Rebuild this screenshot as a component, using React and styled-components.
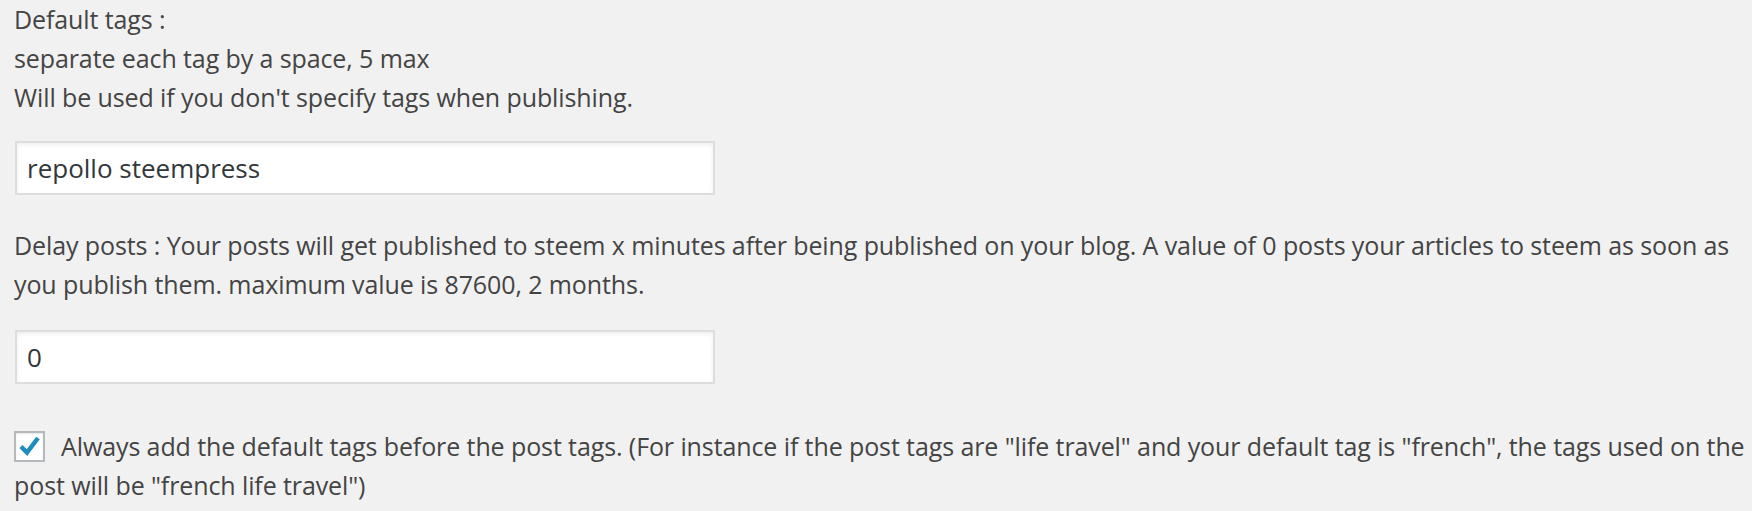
import styled, { createGlobalStyle } from "styled-components";

const GlobalStyle = createGlobalStyle`
  html, body {
    margin: 0;
    padding: 0;
    background: #f1f1f1;
  }
  body {
    font-family: "Open Sans", "Liberation Sans", sans-serif;
    color: #444;
    letter-spacing: -0.1px;
  }
`;

const Page = styled.div`
  width: 1752px;
  height: 511px;
  overflow: hidden;
  padding: 0 6px 0 14px;
  box-sizing: border-box;
`;

const Description = styled.p`
  margin: 0;
  padding-top: ${(p) => p.$top || 0}px;
  font-size: 25px;
  line-height: 39px;
`;

const TextInput = styled.input`
  display: block;
  box-sizing: border-box;
  width: 700px;
  height: 54px;
  margin: ${(p) => p.$top || 0}px 0 0 1px;
  padding: 0 10px;
  border: 2px solid #ddd;
  background: #fff;
  box-shadow: inset 0 2px 4px rgba(0, 0, 0, 0.07);
  font-family: "Open Sans", "Liberation Sans", sans-serif;
  font-size: 26px;
  letter-spacing: 0;
  color: #32373c;
  outline: none;
`;

const CheckRow = styled.p`
  margin: ${(p) => p.$top || 0}px 0 0;
  font-size: 25px;
  line-height: 39px;
`;

const Box = styled.span`
  display: inline-block;
  vertical-align: -6px;
  box-sizing: border-box;
  width: 31px;
  height: 31px;
  margin-right: 16px;
  border: 2px solid #b4b9be;
  background: #fff;
  box-shadow: inset 0 1px 2px rgba(0, 0, 0, 0.1);
`;

const Tick = () => (
  <svg width="27" height="27" viewBox="0 0 27 27" style={{ display: "block" }}>
    <path d="M5 13.5 L11 19.5 L22 5" fill="none" stroke="#1e8cbe" strokeWidth="4.5" />
  </svg>
);

export default function App() {
  return (
    <>
      <GlobalStyle />
      <Page>
        <Description>
          Default tags :<br />
          separate each tag by a space, 5 max<br />
          Will be used if you don't specify tags when publishing.
        </Description>
        <TextInput $top={24} defaultValue="repollo steempress" />
        <Description $top={31}>
          Delay posts : Your posts will get published to steem x minutes after being published on your blog. A value of 0 posts your articles to steem as soon as you publish them. maximum value is 87600, 2 months.
        </Description>
        <TextInput $top={26} defaultValue="0" />
        <CheckRow $top={43}>
          <Box>
            <Tick />
          </Box>
          Always add the default tags before the post tags. (For instance if the post tags are "life travel" and your default tag is "french", the tags used on the post will be "french life travel")
        </CheckRow>
      </Page>
    </>
  );
}
